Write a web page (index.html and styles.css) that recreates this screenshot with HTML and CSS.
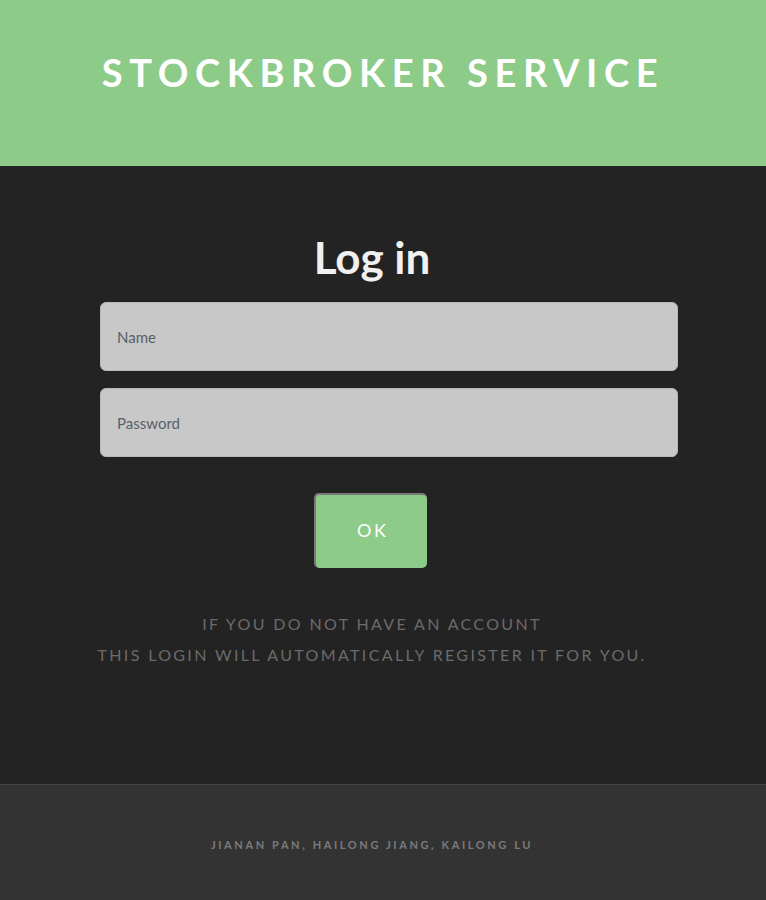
FILE: index.html
```html
<!DOCTYPE html>
<html>
<head>
<meta charset="utf-8">
<link rel="stylesheet" href="styles.css">
</head>
<body>
<header class="top">
  <h1 class="brand">STOCKBROKER SERVICE</h1>
</header>
<main class="main">
  <h2 class="title">Log in</h2>
  <form class="form">
    <input class="field" type="text" placeholder="Name">
    <input class="field" type="password" placeholder="Password">
  </form>
  <button class="ok" type="button">OK</button>
  <p class="note">IF YOU DO NOT HAVE AN ACCOUNT<br>THIS LOGIN WILL AUTOMATICALLY REGISTER IT FOR YOU.</p>
</main>
<footer class="foot">
  <p class="credits">JIANAN PAN, HAILONG JIANG, KAILONG LU</p>
</footer>
</body>
</html>
```
FILE: styles.css
```css
* { box-sizing: border-box; }
html, body { margin: 0; padding: 0; }
body {
  font-family: "Lato", "Noto Sans", sans-serif;
  background: #232323;
}
.top {
  background: #8dcb89;
  height: 166px;
  display: flex;
  justify-content: center;
  padding-top: 50px;
}
.brand {
  margin: 0;
  color: #fff;
  font-size: 38px;
  font-weight: 700;
  letter-spacing: 6.6px;
  line-height: 44px;
}
.main {
  height: 618px;
  display: flex;
  flex-direction: column;
  align-items: center;
  padding-top: 63px;
  padding-right: 22px;
}
.title {
  margin: 0;
  color: #f0f0f0;
  font-size: 44px;
  font-weight: 700;
  line-height: 56px;
}
.form {
  width: 578px;
  margin-top: 17px;
  margin-left: 34px;
  display: flex;
  flex-direction: column;
  gap: 17px;
}
.field {
  width: 100%;
  height: 69px;
  background: #c8c8c8;
  border: 1px solid #b8b8b8;
  border-radius: 6px;
  padding: 0 16px;
  font-family: inherit;
  font-size: 15px;
  color: #333;
  outline: none;
}
.field::placeholder { color: #56606c; }
.ok {
  margin-top: 36px;
  margin-right: 3px;
  width: 113px;
  height: 75px;
  background: #8dcb89;
  border: none;
  border-top: 2px solid #7a7a7a;
  border-left: 2px solid #7a7a7a;
  border-radius: 5px;
  color: #fff;
  font-family: inherit;
  font-size: 18px;
  letter-spacing: 0.15em;
  padding: 0 0 3px 0.15em;
}
.note {
  margin: 40px 0 0;
  color: #6b6b6b;
  font-size: 16px;
  line-height: 31px;
  letter-spacing: 2.35px;
  text-align: center;
}
.foot {
  background: #333;
  border-top: 1px solid #444;
  height: 116px;
  display: flex;
  justify-content: center;
  padding-top: 52px;
  padding-right: 22px;
}
.credits {
  margin: 0;
  color: #7b7b7b;
  font-size: 11px;
  font-weight: 700;
  letter-spacing: 2.6px;
  line-height: 16px;
}
```
